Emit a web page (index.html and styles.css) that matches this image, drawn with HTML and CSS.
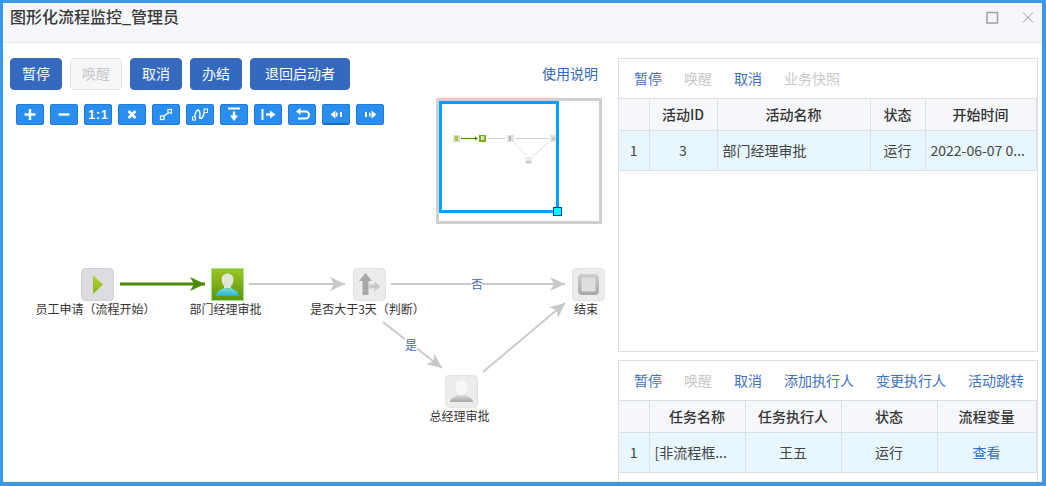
FILE: index.html
```html
<!DOCTYPE html>
<html lang="en">

<head>
    <meta charset="UTF-8">
    <title>图形化流程监控_管理员</title>
    <link rel="stylesheet" href="styles.css">
</head>

<body>
    <div class="window">
        <div class="win-head">
            <h1>图形化流程监控_管理员</h1>
            <div class="win-tools">
                <svg width="14" height="14" viewBox="0 0 14 14"><rect x="2" y="1.500" width="10.500" height="10.500" fill="none" stroke="#a0a0a0" stroke-width="1.500"/></svg>
                <svg width="14" height="14" viewBox="0 0 14 14"><path d="M2 1.500 L12 11.500 M12 1.500 L2 11.500" stroke="#a0a0a0" stroke-width="1" fill="none"/></svg>
            </div>
        </div>

        <div class="win-body">
            <div class="left">
                <div class="btn-row">
                    <button class="btn">暂停</button>
                    <button class="btn disabled">唤醒</button>
                    <button class="btn">取消</button>
                    <button class="btn">办结</button>
                    <button class="btn wide">退回启动者</button>
                    <a class="help-link">使用说明</a>
                </div>

                <div class="tool-row">
                    <span class="tool"><svg width="14" height="13" viewBox="0 0 14 13"><path d="M7 1v11M1.500 6.500h11" stroke="#fff" stroke-width="2.400"/></svg></span>
                    <span class="tool"><svg width="14" height="13" viewBox="0 0 14 13"><path d="M1.500 6.500h11" stroke="#fff" stroke-width="2.400"/></svg></span>
                    <span class="tool tool-text">1:1</span>
                    <span class="tool"><svg width="14" height="13" viewBox="0 0 14 13"><path d="M3.500 3l7 7M10.500 3l-7 7" stroke="#fff" stroke-width="2.600"/></svg></span>
                    <span class="tool"><svg width="16" height="13" viewBox="0 0 16 13"><rect x="2.500" y="8" width="3.500" height="3.500" fill="none" stroke="#fff" stroke-width="1.200"/><rect x="10" y="1.500" width="3.500" height="3.500" fill="none" stroke="#fff" stroke-width="1.200"/><path d="M6 8l4-3" stroke="#fff" stroke-width="1.200"/></svg></span>
                    <span class="tool"><svg width="16" height="13" viewBox="0 0 16 13"><rect x="0.500" y="9" width="3" height="3" fill="none" stroke="#fff"/><rect x="12" y="1" width="3.500" height="3.500" fill="none" stroke="#fff"/><path d="M2.500 9C3.500 3 6 0 7.500 3.500s-1 7 1 7 3-3 3.500-5.500" stroke="#fff" stroke-width="1.400" fill="none"/></svg></span>
                    <span class="tool"><svg width="14" height="15" viewBox="0 0 14 15"><path d="M1 1.500h12" stroke="#fff" stroke-width="2"/><path d="M7 4.500v6" stroke="#fff" stroke-width="2.400"/><path d="M3 8.500L7 14l4-5.500z" fill="#fff"/></svg></span>
                    <span class="tool"><svg width="15" height="13" viewBox="0 0 15 13"><path d="M1.500 1v11" stroke="#fff" stroke-width="2"/><path d="M5 6.500h6" stroke="#fff" stroke-width="2.400"/><path d="M9 2.500l5.500 4L9 10.500z" fill="#fff"/></svg></span>
                    <span class="tool"><svg width="15" height="13" viewBox="0 0 15 13"><path d="M4 3.500h6.500a3.500 3.500 0 0 1 0 7H3" stroke="#fff" stroke-width="2" fill="none"/><path d="M5.500 0L1 3.500 5.500 7z" fill="#fff"/></svg></span>
                    <span class="tool tool-deep"><svg width="15" height="13" viewBox="0 0 15 13"><path d="M6.500 2.500L1.500 6.500l5 4z" fill="#fff"/><rect x="7" y="4.500" width="1.500" height="4" fill="#fff"/><rect x="11" y="4" width="2" height="5" fill="#fff"/></svg></span>
                    <span class="tool"><svg width="15" height="13" viewBox="0 0 15 13"><rect x="2" y="4" width="2" height="5" fill="#fff"/><rect x="6" y="4.500" width="1.500" height="4" fill="#fff"/><path d="M8.500 2.500l5 4-5 4z" fill="#fff"/></svg></span>
                </div>

                <div class="canvas">
                    <svg class="edges" width="608" height="380" viewBox="0 0 608 380">
                        <defs>
                            <marker id="head-green" markerWidth="16" markerHeight="16" refX="15" refY="7" orient="auto" markerUnits="userSpaceOnUse"><path d="M0 0L15 7L0 14L4 7z" fill="#4a8a00"/></marker>
                            <marker id="head-gray" markerWidth="16" markerHeight="16" refX="15" refY="7" orient="auto" markerUnits="userSpaceOnUse"><path d="M0 0L15 7L0 14L4 7z" fill="#c9c9c9"/></marker>
                        </defs>
                        <line x1="120" y1="159" x2="205" y2="159" stroke="#4a8a00" stroke-width="3" marker-end="url(#head-green)"/>
                        <line x1="249" y1="159" x2="345" y2="159" stroke="#c9c9c9" stroke-width="2" marker-end="url(#head-gray)"/>
                        <line x1="391" y1="159" x2="565" y2="159" stroke="#c9c9c9" stroke-width="2" marker-end="url(#head-gray)"/>
                        <line x1="383" y1="197" x2="442" y2="243" stroke="#c9c9c9" stroke-width="2" marker-end="url(#head-gray)"/>
                        <line x1="483" y1="247" x2="565" y2="178" stroke="#c9c9c9" stroke-width="2" marker-end="url(#head-gray)"/>
                    </svg>

                    <span class="edge-label label-no">否</span>
                    <span class="edge-label label-yes">是</span>

                    <div class="node node-start">
                        <svg class="tile" width="33" height="33" viewBox="0 0 33 33">
                            <defs><linearGradient id="play" x1="0" y1="0" x2="0" y2="1"><stop offset="0" stop-color="#b4d23a"/><stop offset="1" stop-color="#8cb80c"/></linearGradient></defs>
                            <rect x="0.500" y="0.500" width="32" height="32" rx="4" fill="#dcdde1" stroke="#cfd0d8"/>
                            <path d="M12 7L22 16.500L12 26z" fill="url(#play)"/>
                        </svg>
                        <span>员工申请（流程开始）</span>
                    </div>

                    <div class="node node-manager">
                        <svg class="tile" width="33" height="33" viewBox="0 0 33 33">
                            <defs>
                                <linearGradient id="green-bg" x1="0" y1="0" x2="0" y2="1"><stop offset="0" stop-color="#9dc422"/><stop offset="1" stop-color="#5c9409"/></linearGradient>
                                <linearGradient id="cyan" x1="0" y1="0" x2="0" y2="1"><stop offset="0" stop-color="#7fe0e4"/><stop offset="1" stop-color="#26b4d0"/></linearGradient>
                            </defs>
                            <rect x="0.500" y="0.500" width="32" height="32" fill="url(#green-bg)" stroke="#9aea92"/>
                            <path d="M13 20v-2c-1.500-1.500-2.500-4-2.500-6.500C10.500 8 13 5.500 16.500 5.500S22.500 8 22.500 11.500c0 2.500-1 5-2.500 6.500v2z" fill="#dfe6d6"/>
                            <path d="M5 28c0-5 5-6 8.500-8.500 1.500 1.500 4.500 1.500 6 0C23 22 28 23 28 28z" fill="url(#cyan)"/>
                        </svg>
                        <span>部门经理审批</span>
                    </div>

                    <div class="node node-gate">
                        <svg class="tile" width="33" height="33" viewBox="0 0 33 33">
                            <rect x="0.500" y="0.500" width="32" height="32" rx="4" fill="#ececec" stroke="#e2e2e2"/>
                            <path d="M9.500 27V13H6L12.500 5L19 13H15.500V27z" fill="#a8a8a8"/>
                            <path d="M15.500 16.500h6v-3l6 5-6 5v-3h-6z" fill="#c8c8c8"/>
                        </svg>
                        <span>是否大于3天（判断）</span>
                    </div>

                    <div class="node node-end">
                        <svg class="tile" width="33" height="33" viewBox="0 0 33 33">
                            <defs><linearGradient id="end-ring" x1="0" y1="0" x2="0" y2="1"><stop offset="0" stop-color="#cfcfcf"/><stop offset="1" stop-color="#a8a8a8"/></linearGradient></defs>
                            <rect x="0.500" y="0.500" width="32" height="32" rx="4" fill="#ececec" stroke="#e2e2e2"/>
                            <rect x="6" y="6" width="21" height="21" rx="4" fill="url(#end-ring)"/>
                            <rect x="9.500" y="9.500" width="14" height="14" rx="1.500" fill="#dedede"/>
                        </svg>
                        <span>结束</span>
                    </div>

                    <div class="node node-boss">
                        <svg class="tile" width="33" height="33" viewBox="0 0 33 33">
                            <defs><linearGradient id="boss-base" x1="0" y1="0" x2="0" y2="1"><stop offset="0" stop-color="#e0e0e0"/><stop offset="1" stop-color="#a6a6a6"/></linearGradient></defs>
                            <rect x="0.500" y="0.500" width="32" height="32" rx="4" fill="#ececec" stroke="#e2e2e2"/>
                            <path d="M13 20v-2c-1.500-1.500-2.500-4-2.500-6.500C10.500 8 13 5.500 16.500 5.500S22.500 8 22.500 11.500c0 2.500-1 5-2.500 6.500v2z" fill="#f8f8f8"/>
                            <path d="M5 27c0-4 5-5 8.500-7.500 1.500 1.500 4.500 1.500 6 0C23 22 28 23 28 27z" fill="url(#boss-base)"/>
                        </svg>
                        <span>总经理审批</span>
                    </div>

                    <div class="overview">
                        <svg class="mini" width="160" height="120" viewBox="0 0 160 120">
                            <rect x="14" y="34" width="7" height="7" fill="#dcdcdc"/>
                            <rect x="16" y="35" width="3" height="5" fill="#a6cc30"/>
                            <line x1="22" y1="37.500" x2="38" y2="37.500" stroke="#4a8a00" stroke-width="1.200"/>
                            <path d="M36 35.500l3 2-3 2z" fill="#4a8a00"/>
                            <rect x="40" y="34" width="7" height="7" fill="#7cab18"/>
                            <rect x="42" y="35" width="3" height="4" fill="#d8e8b8"/>
                            <line x1="49" y1="37.500" x2="66" y2="37.500" stroke="#cfcfcf"/>
                            <rect x="68" y="34" width="7" height="7" fill="#e2e2e2"/>
                            <rect x="70" y="35" width="2" height="5" fill="#b4b4b4"/>
                            <line x1="76" y1="37.500" x2="110" y2="37.500" stroke="#cfcfcf"/>
                            <rect x="111" y="34" width="7" height="7" fill="#e2e2e2"/>
                            <rect x="113" y="36" width="3" height="3" fill="#cacaca"/>
                            <line x1="75" y1="42" x2="87" y2="54" stroke="#cfcfcf" stroke-dasharray="2 1"/>
                            <rect x="86" y="56" width="7" height="7" fill="#ececec"/>
                            <rect x="87" y="60" width="5" height="2" fill="#cacaca"/>
                            <line x1="94" y1="55" x2="110" y2="41" stroke="#cfcfcf" stroke-dasharray="2 1"/>
                        </svg>
                        <div class="view-box"></div>
                        <div class="view-handle"></div>
                    </div>
                </div>
            </div>

            <div class="right">
                <div class="panel panel-activity">
                    <div class="links">
                        <a>暂停</a>
                        <a class="off">唤醒</a>
                        <a>取消</a>
                        <a class="off">业务快照</a>
                    </div>
                    <table class="grid">
                        <colgroup>
                            <col class="c-num"><col class="c-id"><col class="c-name"><col class="c-state"><col class="c-time">
                        </colgroup>
                        <tr>
                            <th></th><th>活动ID</th><th>活动名称</th><th>状态</th><th>开始时间</th>
                        </tr>
                        <tr class="active">
                            <td class="num">1</td><td class="mid">3</td><td>部门经理审批</td><td class="mid">运行</td><td>2022-06-07 0...</td>
                        </tr>
                    </table>
                </div>

                <div class="panel panel-task">
                    <div class="links">
                        <a>暂停</a>
                        <a class="off">唤醒</a>
                        <a>取消</a>
                        <a>添加执行人</a>
                        <a>变更执行人</a>
                        <a>活动跳转</a>
                    </div>
                    <table class="grid">
                        <colgroup>
                            <col class="c-num"><col class="c-task"><col class="c-task"><col class="c-task"><col class="c-var">
                        </colgroup>
                        <tr>
                            <th></th><th>任务名称</th><th>任务执行人</th><th>状态</th><th>流程变量</th>
                        </tr>
                        <tr class="active">
                            <td class="num">1</td><td>[非流程框...</td><td class="mid">王五</td><td class="mid">运行</td><td class="mid"><a class="view-link">查看</a></td>
                        </tr>
                    </table>
                </div>
            </div>
        </div>
    </div>
</body>

</html>
```

FILE: styles.css
```css
html,
body {
    margin: 0;
    padding: 0;
    height: 100%;
    overflow: hidden;
}

body {
    font-family: "Noto Sans CJK SC", "Liberation Sans", sans-serif;
    font-size: 14px;
    color: #333;
    background: #fff;
}

.window {
    box-sizing: border-box;
    height: 486px;
    border-style: solid;
    border-color: #3b97e8;
    border-width: 3px 4px 4px 3px;
    display: flex;
    flex-direction: column;
    overflow: hidden;
}

.win-head {
    box-sizing: border-box;
    height: 40px;
    flex: none;
    background: #f5f7fb;
    border-bottom: 1px solid #e4e7ee;
    display: flex;
    justify-content: space-between;
    padding: 0 7px 0 7px;
}

.win-head h1 {
    margin: 0;
    font-size: 16px;
    font-weight: 500;
    line-height: 27px;
    color: #3a3a3a;
}

.win-tools {
    display: flex;
    gap: 22px;
    padding-top: 8px;
}

.win-body {
    flex: 1;
    display: flex;
    min-height: 0;
}

.left {
    width: 615px;
    flex: none;
    padding: 15px 0 0 7px;
    box-sizing: border-box;
}

.btn-row {
    display: flex;
    gap: 8px;
    align-items: center;
    padding-right: 20px;
}

.btn {
    box-sizing: border-box;
    width: 52px;
    height: 32px;
    padding: 0 0 2px;
    border: 1px solid #3569bd;
    border-radius: 4px;
    background: #3569bd;
    color: #fff;
    font-family: inherit;
    font-size: 14px;
}

.btn.wide {
    width: 100px;
}

.btn.disabled {
    background: #f5f6f8;
    border-color: #e2e4ea;
    color: #c8c8c8;
}

.help-link {
    margin-left: auto;
    margin-bottom: 2px;
    color: #3569bd;
}

.tool-row {
    display: flex;
    gap: 6px;
    margin: 14px 0 0 6px;
}

.tool {
    box-sizing: border-box;
    width: 28px;
    height: 21px;
    background: #2a8eee;
    border: 1px solid #1f7cd6;
    border-radius: 2px;
    display: flex;
    align-items: center;
    justify-content: center;
}

.tool-deep {
    border-bottom: 2px solid #1a6cc0;
}

.tool-text {
    color: #fff;
    font-family: "Liberation Sans", sans-serif;
    font-size: 12px;
    font-weight: bold;
    letter-spacing: 1px;
    padding-left: 1px;
}

/* the diagram is a free canvas, everything in it is placed by coordinates */
.canvas {
    position: relative;
    height: 0;
    margin-left: -10px;
}

.edges {
    position: absolute;
    left: 0;
    top: 0;
}

.edge-label {
    position: absolute;
    background: #fff;
    color: #4a66a8;
    font-size: 12px;
    line-height: 14px;
}

.label-no {
    left: 471px;
    top: 152px;
}

.label-yes {
    left: 405px;
    top: 213px;
}

.node {
    position: absolute;
    width: 140px;
    margin-left: -70px;
    display: flex;
    flex-direction: column;
    align-items: center;
    font-size: 12px;
    line-height: 16px;
    color: #333;
    white-space: nowrap;
}

.node span {
    margin-right: 4px;
}

.tile {
    display: block;
}

.node-start {
    left: 97.500px;
    top: 143px;
}

.node-manager {
    left: 227.500px;
    top: 143px;
}

.node-gate {
    left: 369.500px;
    top: 143px;
}

.node-end {
    left: 588px;
    top: 143px;
}

.node-boss {
    left: 461.500px;
    top: 250px;
}

.overview {
    position: absolute;
    left: 436px;
    top: -27px;
    box-sizing: border-box;
    width: 166px;
    height: 126px;
    border: 3px solid #d0d0d0;
    background: #fff;
}

.mini {
    position: absolute;
    left: 0;
    top: 0;
}

.view-box {
    position: absolute;
    left: 0;
    top: 0;
    box-sizing: border-box;
    width: 120px;
    height: 112px;
    border: 3px solid #00a2ff;
}

.view-handle {
    position: absolute;
    left: 114px;
    top: 106px;
    box-sizing: border-box;
    width: 9px;
    height: 9px;
    background: #00ffff;
    border: 1px solid #0033cc;
}

.right {
    width: 420px;
    flex: none;
    padding-top: 15px;
    display: flex;
    flex-direction: column;
    gap: 8px;
}

.panel {
    box-sizing: border-box;
    flex: none;
    border: 1px solid #dcdfe6;
    background: #fff;
}

.panel-activity {
    height: 294px;
}

.panel-task {
    height: 140px;
}

.links {
    box-sizing: border-box;
    height: 39px;
    display: flex;
    gap: 22px;
    padding: 9px 0 0 15px;
    color: #3f70c0;
    line-height: 20px;
}

.links .off {
    color: #c9c9c9;
}

.grid {
    border-collapse: collapse;
    table-layout: fixed;
    width: 417px;
}

.c-num {
    width: 30px;
}

.c-id {
    width: 68px;
}

.c-name {
    width: 153px;
}

.c-state {
    width: 55px;
}

.c-time {
    width: 111px;
}

.c-task {
    width: 96px;
}

.c-var {
    width: 99px;
}

.grid th,
.grid td {
    border: 1px solid #dcdfe6;
    padding: 0 5px 2px;
    white-space: nowrap;
    overflow: hidden;
}

.grid tr th:first-child,
.grid tr td:first-child {
    border-left: 0;
}

.grid th {
    height: 29px;
    background: #f5f7fb;
    font-weight: 500;
    color: #333;
}

.grid td {
    height: 37px;
    color: #444;
}

.active td {
    background: #e8f6fe;
}

.num {
    text-align: center;
    color: #666;
}

.mid {
    text-align: center;
}

.view-link {
    color: #2f72c4;
}
```
